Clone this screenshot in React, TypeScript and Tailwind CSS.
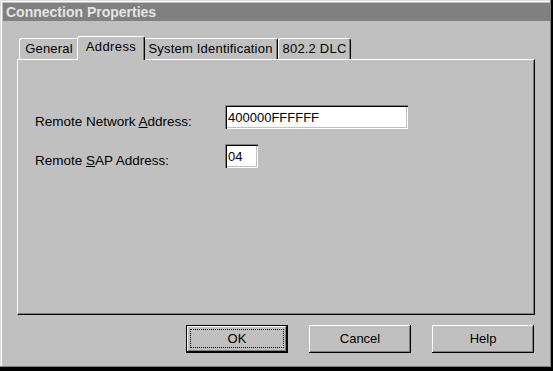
const tabs = [
  { label: "General", width: "w-[60px]" },
  { label: "Address", width: "w-[68px]", active: true },
  { label: "System Identification", width: "w-[135px]" },
  { label: "802.2 DLC", width: "w-[73px]" },
];

function Tab({ label, width, active }: { label: string; width: string; active?: boolean }) {
  if (active) {
    return (
      <div
        className={`${width} relative z-10 -mx-[2px] -mb-px h-[24px] flex justify-center rounded-t-[3px] border-t border-l border-r border-white border-r-black bg-[#c0c0c0] shadow-[inset_-1px_0_#808080] text-[13px] leading-[20px] tracking-[0.4px]`}
      >
        {label}
      </div>
    );
  }
  return (
    <div
      className={`${width} h-[21px] flex justify-center rounded-t-[3px] border-t border-l border-r border-white border-r-black shadow-[inset_-1px_0_#808080] text-[13px] leading-[20px] tracking-[0.2px]`}
    >
      {label}
    </div>
  );
}

function Field({ value, width }: { value: string; width: string }) {
  return (
    <input
      readOnly
      value={value}
      className={`${width} h-[24px] bg-white pl-[3px] text-[13px] leading-[18px] text-black outline-none font-['Liberation_Sans',Arial,sans-serif] shadow-[inset_1px_1px_#808080,inset_2px_2px_#000,inset_-1px_-1px_#fff,inset_-2px_-2px_#c0c0c0]`}
    />
  );
}

function Button({ label, isDefault }: { label: string; isDefault?: boolean }) {
  if (isDefault) {
    return (
      <button className="relative w-[102px] h-[28px] border border-black bg-[#c0c0c0] text-[13px] shadow-[inset_-1px_-1px_#000,inset_1px_1px_#fff,inset_-2px_-2px_#808080]">
        <span className="absolute left-[3px] top-[3px] right-[3px] bottom-[4px] border border-dotted border-black" />
        {label}
      </button>
    );
  }
  return (
    <button className="w-[102px] h-[28px] bg-[#c0c0c0] text-[13px] shadow-[inset_-1px_-1px_#000,inset_1px_1px_#fff,inset_-2px_-2px_#808080]">
      {label}
    </button>
  );
}

export default function App() {
  return (
    <div className="w-[553px] h-[371px] flex flex-col p-[3px] bg-[#c0c0c0] text-black font-['Liberation_Sans',Arial,sans-serif] shadow-[inset_-2px_-4px_#000,inset_-3px_-5px_#808080,inset_1px_1px_#dfdfdf,inset_2px_2px_#fff] select-none">
      <div className="h-[18px] bg-[#808080] pl-[3px] text-[14px] font-bold leading-[18px] text-[#e4e4e4]">
        Connection Properties
      </div>

      <div className="ml-[14px] w-[518px] flex flex-col">
        <div className="mt-[15px] h-[23px] flex items-end pl-[2px]">
          {tabs.map((t) => (
            <Tab key={t.label} {...t} />
          ))}
        </div>

        <div className="h-[256px] border-t border-l border-white border-r border-b border-r-black border-b-black shadow-[inset_-1px_-1px_#808080] flex flex-col gap-[15px] pt-[45px] pl-[17px]">
          <div className="flex items-start h-[24px]">
            <span className="w-[190px] pt-[9px] text-[13.5px] leading-[16px]">
              Remote Network <u>A</u>ddress:
            </span>
            <Field value="400000FFFFFF" width="w-[183px]" />
          </div>
          <div className="flex items-start h-[24px]">
            <span className="w-[190px] pt-[9px] text-[13.5px] leading-[16px]">
              Remote <u>S</u>AP Address:
            </span>
            <Field value="04" width="w-[33px]" />
          </div>
        </div>

        <div className="mt-[10px] flex justify-end gap-[21px] pr-[1px]">
          <Button label="OK" isDefault />
          <Button label="Cancel" />
          <Button label="Help" />
        </div>
      </div>
    </div>
  );
}
